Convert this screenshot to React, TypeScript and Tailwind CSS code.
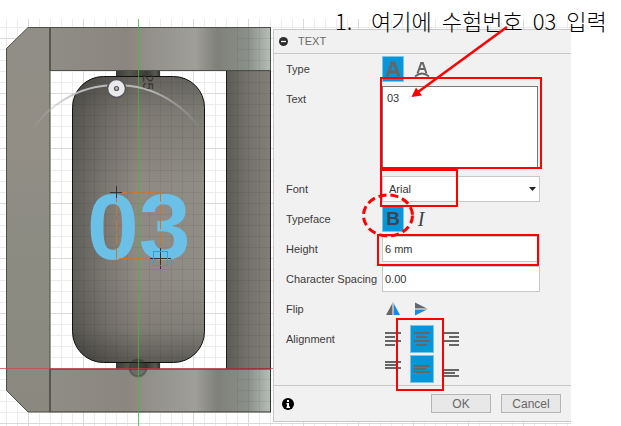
import type { ReactNode } from "react";

const LABEL = "w-24 shrink-0 pt-2 leading-[15px]";
const FIELD =
  "h-[26px] w-[158px] border border-[#c8c8c8] bg-white text-[11px] text-[#333] outline-none";
const ON = "bg-[#0796d9] border border-[#7cc4ea]";

function Row({ label, htmlFor, children }: { label: string; htmlFor?: string; children: ReactNode }) {
  return (
    <div className="flex min-h-[30px]">
      {htmlFor ? (
        <label htmlFor={htmlFor} className={LABEL}>{label}</label>
      ) : (
        <span className={LABEL}>{label}</span>
      )}
      {children}
    </div>
  );
}

function Tool({ name, on, tall, children }: { name: string; on?: boolean; tall?: boolean; children: ReactNode }) {
  return (
    <button
      type="button"
      aria-label={name}
      aria-pressed={!!on}
      className={`flex items-center justify-center ${tall ? "h-7 w-6" : "h-[26px] w-[22px]"} ${on ? ON : ""}`}
    >
      {children}
    </button>
  );
}

function Lines({ rows }: { rows: [number, number, number][] }) {
  return (
    <svg width="16" height="16" viewBox="0 0 16 16" className="shrink-0" shapeRendering="crispEdges">
      {rows.map(([x, y, w]) => (
        <rect key={y} x={x} y={y} width={w} height="2" fill="#666" />
      ))}
    </svg>
  );
}

function Viewport() {
  return (
    <svg className="absolute left-0 top-[19px]" width="571" height="407" viewBox="0 19 571 407" role="img" aria-label="Model view">
      <defs>
        <pattern id="minor" x="6" y="5" width="11" height="11" patternUnits="userSpaceOnUse">
          <path d="M.5 0V11M0 .5H11" stroke="#ececec" fill="none" />
        </pattern>
        <pattern id="major" x="28" y="38" width="55" height="55" patternUnits="userSpaceOnUse">
          <path d="M.5 0V55M0 .5H55" stroke="#dadada" fill="none" />
        </pattern>
        <pattern id="shade" x="6" y="5" width="11" height="11" patternUnits="userSpaceOnUse">
          <path d="M.5 0V11M0 .5H11" stroke="#000" strokeOpacity=".06" fill="none" />
        </pattern>
        <linearGradient id="beam">
          <stop offset="0" stopColor="#8f8d85" />
          <stop offset=".35" stopColor="#8b867f" />
          <stop offset=".45" stopColor="#93908a" />
          <stop offset=".66" stopColor="#9f9e98" />
          <stop offset=".76" stopColor="#7f8079" />
          <stop offset=".9" stopColor="#8b908a" />
          <stop offset="1" stopColor="#b7beb7" />
        </linearGradient>
        <linearGradient id="post" x2="0" y2="1">
          <stop offset="0" stopColor="#908e86" />
          <stop offset=".3" stopColor="#928e86" />
          <stop offset=".6" stopColor="#8b8b82" />
          <stop offset="1" stopColor="#8b897f" />
        </linearGradient>
        <linearGradient id="roller">
          <stop offset="0" stopColor="#605f5a" />
          <stop offset=".25" stopColor="#7b7771" />
          <stop offset=".5" stopColor="#8f8a83" />
          <stop offset="1" stopColor="#8f8d85" />
        </linearGradient>
        <linearGradient id="ends" x2="0" y2="1">
          <stop offset="0" stopColor="#000" stopOpacity=".3" />
          <stop offset=".13" stopColor="#000" stopOpacity=".12" />
          <stop offset=".38" stopColor="#000" stopOpacity="0" />
          <stop offset=".7" stopColor="#000" stopOpacity="0" />
          <stop offset=".88" stopColor="#000" stopOpacity=".1" />
          <stop offset="1" stopColor="#000" stopOpacity=".35" />
        </linearGradient>
        <linearGradient id="side">
          <stop offset="0" stopColor="#5c5b56" />
          <stop offset=".5" stopColor="#75726c" />
          <stop offset="1" stopColor="#827f78" />
        </linearGradient>
        <linearGradient id="shaft">
          <stop offset="0" stopColor="#393b35" />
          <stop offset=".3" stopColor="#55574f" />
          <stop offset=".7" stopColor="#3b3c37" />
          <stop offset=".9" stopColor="#575952" />
          <stop offset="1" stopColor="#30322c" />
        </linearGradient>
        <linearGradient id="arc" gradientUnits="userSpaceOnUse" x1="30" x2="203" y1="0" y2="0">
          <stop offset="0" stopColor="#b5b5b8" stopOpacity="0" />
          <stop offset=".3" stopColor="#bcbcbf" />
          <stop offset=".7" stopColor="#b5b5b8" />
          <stop offset="1" stopColor="#b5b5b8" stopOpacity="0" />
        </linearGradient>
      </defs>
      <rect y="19" width="571" height="407" fill="#fff" />
      <rect y="19" width="571" height="407" fill="url(#minor)" />
      <rect y="19" width="571" height="407" fill="url(#major)" />
      <path d="M28 27.5H50V412H28L6.500 390.500V48.500Z" fill="url(#post)" stroke="#4d4f49" />
      <rect x="226.500" y="70.500" width="44" height="298" fill="url(#side)" stroke="#1f1f1d" />
      <rect x="116" y="71" width="44" height="6" fill="url(#shaft)" />
      <rect x="116" y="362" width="44" height="7" fill="url(#shaft)" />
      <rect x="50" y="27.500" width="220.500" height="43" fill="url(#beam)" stroke="#4d4f49" />
      <rect x="50" y="369" width="220.500" height="43" fill="url(#beam)" stroke="#34352f" />
      <path d="M50 27V70M50 369V412" stroke="#555750" strokeWidth="2" />
      <rect x="72.500" y="76.500" width="132" height="286" rx="31" fill="url(#roller)" />
      <rect x="72.500" y="76.500" width="132" height="286" rx="31" fill="url(#ends)" />
      <rect x="72.500" y="76.500" width="132" height="286" rx="31" fill="url(#shade)" stroke="#111" />
      <rect x="226" y="71" width="45" height="298" fill="url(#shade)" />
      <rect x="237" y="28" width="34" height="43" fill="url(#shade)" />
      <rect x="237" y="369" width="34" height="43" fill="url(#shade)" />
      <circle cx="138" cy="368" r="8.500" fill="#333" fillOpacity=".35" stroke="#333" strokeOpacity=".4" strokeWidth="2" />
      <text transform="translate(143 74) rotate(90)" fontSize="15" fontFamily="Liberation Sans, sans-serif" fill="#34332f">25</text>
      <text x="87" y="259" fontSize="93" fontWeight="700" fontFamily="Liberation Sans, Arial, sans-serif" fill="#6bc0e8">03</text>
      <path d="M0 368.500H273" stroke="#d04040" strokeOpacity=".65" />
      <path d="M138.500 19V426" stroke="#31c631" strokeOpacity=".75" />
      <rect x="116.500" y="192.500" width="44" height="66" fill="none" stroke="#c77732" strokeDasharray="11 3" />
      <path d="M110 192.500H122M116.500 186V198M150 258.500H171M160.500 248V269" stroke="#333" />
      <rect x="153.500" y="251.500" width="14" height="14" fill="none" stroke="#21a5dc" />
      <path d="M30 133A102 102 0 0 1 203 133" fill="none" stroke="url(#arc)" strokeWidth="2" />
      <circle cx="116.500" cy="88.500" r="9" fill="#e9e9eb" stroke="#56565a" strokeWidth="1.500" />
      <circle cx="116.500" cy="88.500" r="2" fill="#bbb" stroke="#55555a" strokeWidth="1.200" />
    </svg>
  );
}

function Annotations() {
  return (
    <div className="pointer-events-none absolute left-0 top-0">
      <p className="absolute left-[335px] top-1 flex gap-2.5 whitespace-nowrap font-['Noto_Sans_CJK_KR',sans-serif] text-[22px] font-light leading-8 text-black">
        <span className="w-[26px]">1.</span>
        <span>여기에</span>
        <span>수험번호</span>
        <span>03</span>
        <span>입력</span>
      </p>
      <svg className="relative" width="621" height="426" viewBox="0 0 621 426" fill="none" stroke="#f00" strokeWidth="2" aria-hidden="true">
        <rect x="381" y="78" width="160" height="90" />
        <rect x="381" y="170" width="76" height="36" />
        <rect x="378" y="235" width="160" height="30" />
        <rect x="397" y="319" width="46" height="71" />
        <ellipse cx="388" cy="215.500" rx="24.500" ry="20.500" strokeWidth="3" strokeDasharray="8 4" />
        <path d="M507 27L418 92" strokeWidth="2.500" />
        <path d="M411.500 97L416 87.500L422 95.500Z" fill="#f00" stroke="none" />
      </svg>
    </div>
  );
}

export default function App() {
  return (
    <main className="relative min-h-screen overflow-hidden bg-white font-['Liberation_Sans',Arial,sans-serif] text-[11px] text-[#3c3c3c]">
      <Viewport />
      <form
        className="relative ml-[273px] mr-[50px] mt-[29px] border-y border-l border-[#c8c8c8] bg-[#f1f1f1]"
        onSubmit={(e) => e.preventDefault()}
      >
        <header className="flex h-6 items-center gap-2.5 border-b border-[#c8c8c8] pl-[5px] text-[#6b6b6b]">
          <svg width="9" height="9" viewBox="0 0 9 9" aria-hidden="true">
            <circle cx="4.500" cy="4.500" r="4.500" fill="#2d2d2d" />
            <path d="M2 4.500H7" stroke="#fff" strokeWidth="1.300" />
          </svg>
          <h1>TEXT</h1>
        </header>

        <div className="pb-px pl-3">
          <Row label="Type">
            <div className="flex items-center gap-[7px]">
              <Tool name="Text" on>
                <svg width="16" height="16" viewBox="0 0 16 16" className="shrink-0">
                  <path d="M2 15.500L7 2H9L14 15.500M4 11H12" fill="none" stroke="#666" strokeWidth="3" />
                </svg>
              </Tool>
              <Tool name="Text on path">
                <svg width="16" height="16" viewBox="0 0 16 16" className="shrink-0" fill="none" stroke="#666">
                  <path d="M3.500 12.500L7.200 2H8.800L12.500 12.500M5 8H11" strokeWidth="2" />
                  <path d="M1 15.500Q8 9.500 15 15.500" strokeWidth="1.800" />
                </svg>
              </Tool>
            </div>
          </Row>

          <Row label="Text" htmlFor="text">
            <div className="h-[90px] pt-0.5">
              <textarea
                id="text"
                defaultValue="03"
                className="block h-[82px] w-[156px] resize-none border border-[#777] bg-white px-1 py-1 text-[11px] leading-[15px] text-[#333] outline-none"
              />
            </div>
          </Row>

          <Row label="Font" htmlFor="font">
            <div className="relative self-center">
              <select id="font" className={`${FIELD} block appearance-none pl-1.5`}>
                <option>Arial</option>
              </select>
              <svg className="pointer-events-none absolute right-1 top-[11px]" width="7" height="4" viewBox="0 0 7 4" aria-hidden="true">
                <path d="M0 0H7L3.500 4Z" fill="#222" />
              </svg>
            </div>
          </Row>

          <Row label="Typeface">
            <div className="flex items-center gap-1.5">
              <Tool name="Bold" on>
                <b className="text-[19px] leading-5 text-[#3d4450]">B</b>
              </Tool>
              <Tool name="Italic">
                <i className="font-['Liberation_Serif',serif] text-[20px] leading-5 text-[#3d4450]">I</i>
              </Tool>
            </div>
          </Row>

          <Row label="Height" htmlFor="height">
            <input id="height" defaultValue="6 mm" className={`${FIELD} self-center px-0.5`} />
          </Row>

          <Row label="Character Spacing" htmlFor="spacing">
            <input id="spacing" defaultValue="0.00" className={`${FIELD} self-center px-0.5`} />
          </Row>

          <Row label="Flip">
            <div className="flex items-center gap-1.5">
              <Tool name="Flip horizontally">
                <svg width="14" height="14" viewBox="0 0 14 14" className="shrink-0">
                  <path d="M6.500 1V13H0Z" fill="#666" />
                  <path d="M7.500 1V13H14Z" fill="#168de2" />
                  <path d="M7 0V13" stroke="#b5bcc2" />
                </svg>
              </Tool>
              <Tool name="Flip vertically">
                <svg width="14" height="14" viewBox="0 0 14 14" className="shrink-0">
                  <path d="M1 .5V6.500H13Z" fill="#666" />
                  <path d="M1 7.500V13.500L13 7.500Z" fill="#168de2" />
                  <path d="M1 7H13.500" stroke="#b5bcc2" />
                </svg>
              </Tool>
            </div>
          </Row>

          <Row label="Alignment">
            <div className="-ml-px grid auto-rows-[30px] grid-cols-[repeat(3,24px)] items-center gap-x-[5px]">
              <Tool name="Left" tall>
                <Lines rows={[[0, 1, 16], [0, 5, 10], [0, 9, 16], [0, 13, 10]]} />
              </Tool>
              <Tool name="Center" on tall>
                <Lines rows={[[0, 1, 16], [2, 5, 11], [0, 9, 16], [2, 13, 11]]} />
              </Tool>
              <Tool name="Right" tall>
                <Lines rows={[[0, 1, 16], [6, 5, 10], [0, 9, 16], [6, 13, 10]]} />
              </Tool>
              <Tool name="Top" tall>
                <Lines rows={[[0, 0, 16], [0, 3, 11], [0, 6, 16]]} />
              </Tool>
              <Tool name="Middle" on tall>
                <Lines rows={[[0, 4, 16], [0, 7, 12], [0, 10, 16]]} />
              </Tool>
              <Tool name="Bottom" tall>
                <Lines rows={[[0, 8, 16], [0, 11, 12], [0, 14, 16]]} />
              </Tool>
            </div>
          </Row>
        </div>

        <footer className="flex h-9 items-center gap-2.5 border-t border-[#c8c8c8] pl-2 pr-2.5 text-xs text-[#666]">
          <button type="button" aria-label="Information" className="mr-auto">
            <svg width="12" height="12" viewBox="0 0 12 12">
              <circle cx="6" cy="6" r="6" fill="#000" />
              <path d="M5 2H7V4H5ZM4.500 5H7V8.500H8V10H4.500V8.500H5V6.500H4.500Z" fill="#fff" />
            </svg>
          </button>
          <button type="submit" className="h-[19px] w-[60px] border border-[#b5b5b5] bg-[#e8e8e8] leading-4">OK</button>
          <button type="button" className="h-[19px] w-[60px] border border-[#b5b5b5] bg-[#e8e8e8] leading-4">Cancel</button>
        </footer>
      </form>
      <Annotations />
    </main>
  );
}
